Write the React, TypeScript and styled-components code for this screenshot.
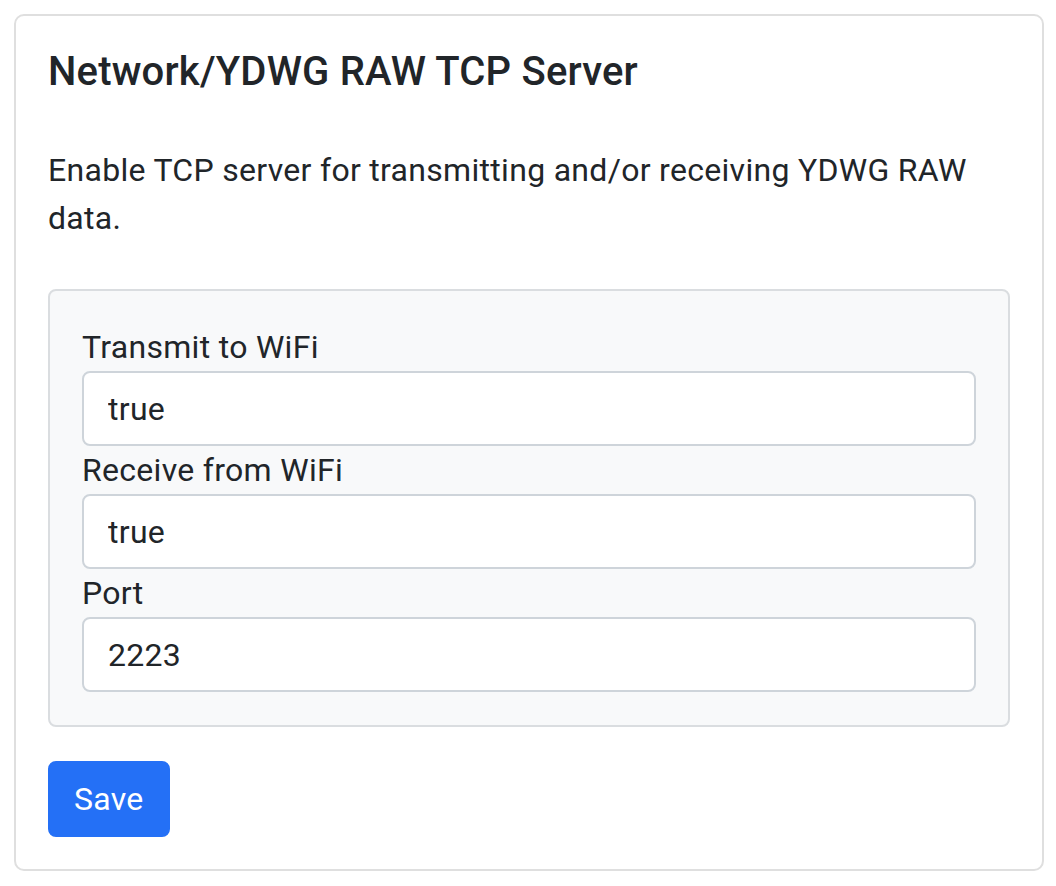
import React from 'react'
import styled, { createGlobalStyle } from 'styled-components'

const GlobalStyle = createGlobalStyle`
  html, body {
    margin: 0;
    padding: 0;
    background: #ffffff;
  }
  body {
    font-family: Roboto, "Noto Sans", "Liberation Sans", sans-serif;
    color: #212529;
    -webkit-font-smoothing: antialiased;
  }
  * {
    box-sizing: border-box;
  }
`

const Page = styled.div`
  padding: 14px 12px 17px 14px;
`

const Card = styled.section`
  border: 2px solid #dfdfdf;
  border-radius: 10px;
  padding: 32px;
  background: #ffffff;
`

const Title = styled.h5`
  margin: 0 0 50px;
  font-size: 40px;
  font-weight: 500;
  line-height: 48px;
  letter-spacing: 0.2px;
`

const Lead = styled.p`
  margin: 0 0 47px;
  font-size: 32px;
  line-height: 48px;
  letter-spacing: 0.3px;
`

const Panel = styled.div`
  display: flex;
  flex-direction: column;
  padding: 32px 32px 33px;
  background: #f8f9fa;
  border: 2px solid #dadde0;
  border-radius: 8px;
  margin-bottom: 34px;
`

const Label = styled.label`
  display: block;
  font-size: 32px;
  line-height: 48px;
  letter-spacing: 0.3px;
`

const Field = styled.input`
  display: block;
  width: 100%;
  height: 75px;
  padding: 0 24px;
  font-family: inherit;
  font-size: 32px;
  letter-spacing: 0.3px;
  color: #212529;
  background: #ffffff;
  border: 2px solid #ced4da;
  border-radius: 8px;
  outline: none;
`

const SaveButton = styled.button`
  height: 76px;
  padding: 0 24px;
  font-family: inherit;
  font-size: 32px;
  letter-spacing: 0.3px;
  color: #ffffff;
  background: #2470f6;
  border: 2px solid #2470f6;
  border-radius: 8px;
  cursor: pointer;
`

const fields = [
  { id: 'tx', label: 'Transmit to WiFi', value: 'true' },
  { id: 'rx', label: 'Receive from WiFi', value: 'true' },
  { id: 'port', label: 'Port', value: '2223' },
]

export default function App() {
  return (
    <Page>
      <GlobalStyle />
      <Card>
        <Title>Network/YDWG RAW TCP Server</Title>
        <Lead>Enable TCP server for transmitting and/or receiving YDWG RAW data.</Lead>
        <Panel>
          {fields.map((f) => (
            <React.Fragment key={f.id}>
              <Label htmlFor={f.id}>{f.label}</Label>
              <Field id={f.id} defaultValue={f.value} />
            </React.Fragment>
          ))}
        </Panel>
        <SaveButton type="button">Save</SaveButton>
      </Card>
    </Page>
  )
}
